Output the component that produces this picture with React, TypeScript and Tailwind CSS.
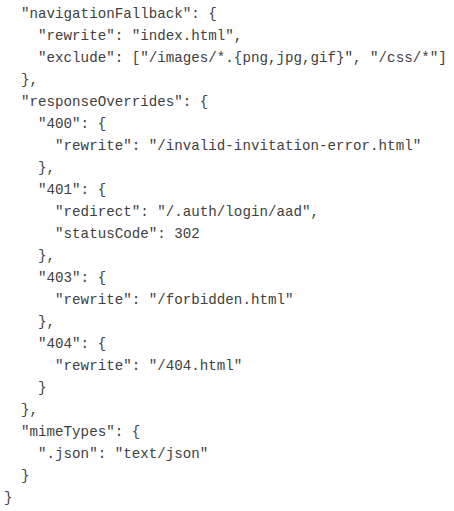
import React from 'react';

const lines = [
  '  "navigationFallback": {',
  '    "rewrite": "index.html",',
  '    "exclude": ["/images/*.{png,jpg,gif}", "/css/*"]',
  '  },',
  '  "responseOverrides": {',
  '    "400": {',
  '      "rewrite": "/invalid-invitation-error.html"',
  '    },',
  '    "401": {',
  '      "redirect": "/.auth/login/aad",',
  '      "statusCode": 302',
  '    },',
  '    "403": {',
  '      "rewrite": "/forbidden.html"',
  '    },',
  '    "404": {',
  '      "rewrite": "/404.html"',
  '    }',
  '  },',
  '  "mimeTypes": {',
  '    ".json": "text/json"',
  '  }',
  '}',
];

export default function App() {
  return (
    <div className="w-[454px] h-[511px] bg-white overflow-hidden">
      <pre className="pt-[3px] pl-[4px] m-0 font-['Liberation_Mono',monospace] text-[14.2px] leading-[22px] text-[#404040]">
        {lines.map((line, i) => (
          <div key={i}>{line}</div>
        ))}
      </pre>
    </div>
  );
}
